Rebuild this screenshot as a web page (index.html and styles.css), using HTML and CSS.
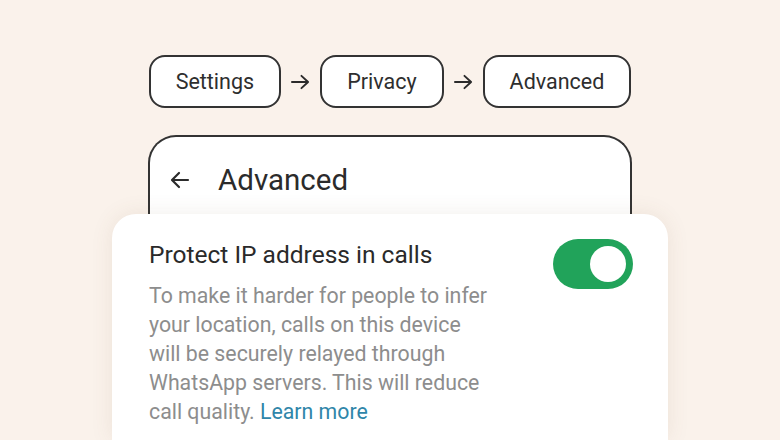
FILE: index.html
```html
<!DOCTYPE html>
<html lang="en">
<head>
<meta charset="utf-8">
<title>Advanced</title>
<link rel="stylesheet" href="styles.css">
</head>
<body>
<div class="stage">
  <div class="crumbs">
    <div class="pill">Settings</div>
    <svg class="sep" viewBox="0 0 20 16" width="20" height="16"><path d="M1 8H18M11 1.5L18 8L11 14.5" fill="none" stroke="#2b2b2b" stroke-width="2" stroke-linecap="round" stroke-linejoin="round"/></svg>
    <div class="pill">Privacy</div>
    <svg class="sep" viewBox="0 0 20 16" width="20" height="16"><path d="M1 8H18M11 1.5L18 8L11 14.5" fill="none" stroke="#2b2b2b" stroke-width="2" stroke-linecap="round" stroke-linejoin="round"/></svg>
    <div class="pill">Advanced</div>
  </div>
  <div class="phone">
    <div class="appbar">
      <svg class="back" viewBox="0 0 24 24" width="24" height="24"><path d="M20 12H4.5M11 5L4 12L11 19" fill="none" stroke="#2b2b2b" stroke-width="2.2" stroke-linecap="round" stroke-linejoin="round"/></svg>
      <span class="apptitle">Advanced</span>
    </div>
  </div>
  <div class="sheet">
    <div class="text">
      <div class="title">Protect IP address in calls</div>
      <div class="desc">To make it harder for people to infer<br>your location, calls on this device<br>will be securely relayed through<br>WhatsApp servers. This will reduce<br>call quality. <span class="link">Learn more</span></div>
    </div>
    <div class="toggle"><div class="knob"></div></div>
  </div>
</div>
</body>
</html>
```
FILE: styles.css
```css
html, body {
  margin: 0;
  padding: 0;
  background: #faf2eb;
}
body {
  font-family: Roboto, "Noto Sans", "Liberation Sans", sans-serif;
  color: #2b2b2b;
}
.stage {
  width: 780px;
  height: 440px;
  overflow: hidden;
  display: flex;
  flex-direction: column;
  align-items: center;
}
.crumbs {
  margin-top: 55px;
  display: flex;
  align-items: center;
  gap: 10px;
}
.pill {
  box-sizing: border-box;
  height: 53px;
  border: 2px solid #333;
  border-radius: 16px;
  background: #fff;
  padding: 0 25px;
  display: flex;
  align-items: center;
  font-size: 21.5px;
  color: #2e2e2e;
}
.sep {
  display: block;
  width: 19px;
}
.phone {
  box-sizing: border-box;
  margin-top: 27px;
  width: 484px;
  height: 79px;
  border: 2px solid #333;
  border-bottom: none;
  border-radius: 28px 28px 0 0;
  background: #fff;
}
.appbar {
  display: flex;
  align-items: center;
  height: 86px;
  padding-left: 18px;
}
.back {
  display: block;
}
.apptitle {
  margin-left: 26px;
  font-size: 29.5px;
  color: #2b2b2b;
}
.sheet {
  box-sizing: border-box;
  width: 556px;
  flex: 1;
  background: #fff;
  border-radius: 24px 24px 0 0;
  box-shadow: 0 0 22px rgba(120, 90, 60, 0.10);
  display: flex;
  justify-content: space-between;
  align-items: flex-start;
  padding: 26px 35px 0 37px;
  position: relative;
}
.title {
  font-size: 24.5px;
  line-height: 30px;
  color: #2a2a2a;
}
.desc {
  margin-top: 11px;
  font-size: 21.3px;
  line-height: 29px;
  color: #8d8d8d;
  white-space: nowrap;
}
.link {
  color: #2f86a9;
}
.toggle {
  box-sizing: border-box;
  margin-top: -1px;
  width: 80px;
  height: 50px;
  border-radius: 25px;
  background: #21a35a;
  padding: 7px;
  display: flex;
  justify-content: flex-end;
}
.knob {
  width: 36px;
  height: 36px;
  border-radius: 50%;
  background: #fff;
}
```
